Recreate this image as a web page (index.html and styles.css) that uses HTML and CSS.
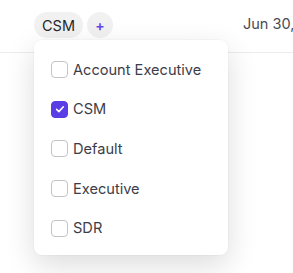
FILE: index.html
```html
<!DOCTYPE html>
<html>
<head>
    <title>Roles</title>
    <link rel="stylesheet" href="styles.css">
</head>
<body>
    <div class="page">
        <div class="row">
            <div class="tags">
                <span class="chip">CSM</span>
                <span class="chip add">+</span>
            </div>
            <span class="date">Jun 30,</span>
        </div>

        <div class="menu">
            <div class="option"><span class="box"></span><span>Account Executive</span></div>
            <div class="option"><span class="box checked">
                <svg viewBox="0 0 16 16" width="12" height="12"><path d="M3.5 8.5l3 3 6-6.5" fill="none" stroke="#fff" stroke-width="2" stroke-linecap="round" stroke-linejoin="round"/></svg>
            </span><span>CSM</span></div>
            <div class="option"><span class="box"></span><span>Default</span></div>
            <div class="option"><span class="box"></span><span>Executive</span></div>
            <div class="option"><span class="box"></span><span>SDR</span></div>
        </div>
    </div>
</body>
</html>
```

FILE: styles.css
```css
body {
    margin: 0;
    background: #fff;
    font-family: Inter, 'Noto Sans', sans-serif;
    color: #3f3f4a;
    overflow: hidden;
}
.page {
    position: relative;
    width: 293px;
    height: 273px;
    overflow: hidden;
}
.row {
    height: 53px;
    border-bottom: 1px solid #ececee;
    display: flex;
    align-items: flex-start;
    padding-left: 34px;
    box-sizing: border-box;
    white-space: nowrap;
}
.tags {
    display: flex;
    gap: 4px;
    margin-top: 12px;
}
.chip {
    height: 26px;
    padding: 0 8px;
    border-radius: 13px;
    background: #f1f1f2;
    font-size: 14.5px;
    color: #27272a;
    display: flex;
    align-items: center;
    box-sizing: border-box;
}
.add {
    width: 26px;
    padding: 0;
    justify-content: center;
    color: #6246ea;
    font-size: 14px;
    font-weight: 600;
}
.date {
    margin-left: 130px;
    margin-top: 15px;
    font-size: 14.5px;
    color: #4a4a52;
}
.menu {
    position: absolute;
    left: 34px;
    top: 40px;
    width: 194px;
    padding: 10px 0 7px;
    background: #fff;
    border-radius: 8px;
    box-shadow: 0 10px 30px rgba(0, 0, 0, 0.14), 0 0 0 1px rgba(0, 0, 0, 0.02);
}
.option {
    display: flex;
    align-items: center;
    height: 39.6px;
    padding-left: 17px;
    gap: 5px;
    font-size: 14.6px;
    color: #3d3d48;
}
.box {
    width: 17px;
    height: 17px;
    border: 1px solid #c4c4c8;
    border-radius: 4px;
    box-sizing: border-box;
    display: flex;
    align-items: center;
    justify-content: center;
}
.box.checked {
    background: #5b3de6;
    border-color: #5b3de6;
}
```
